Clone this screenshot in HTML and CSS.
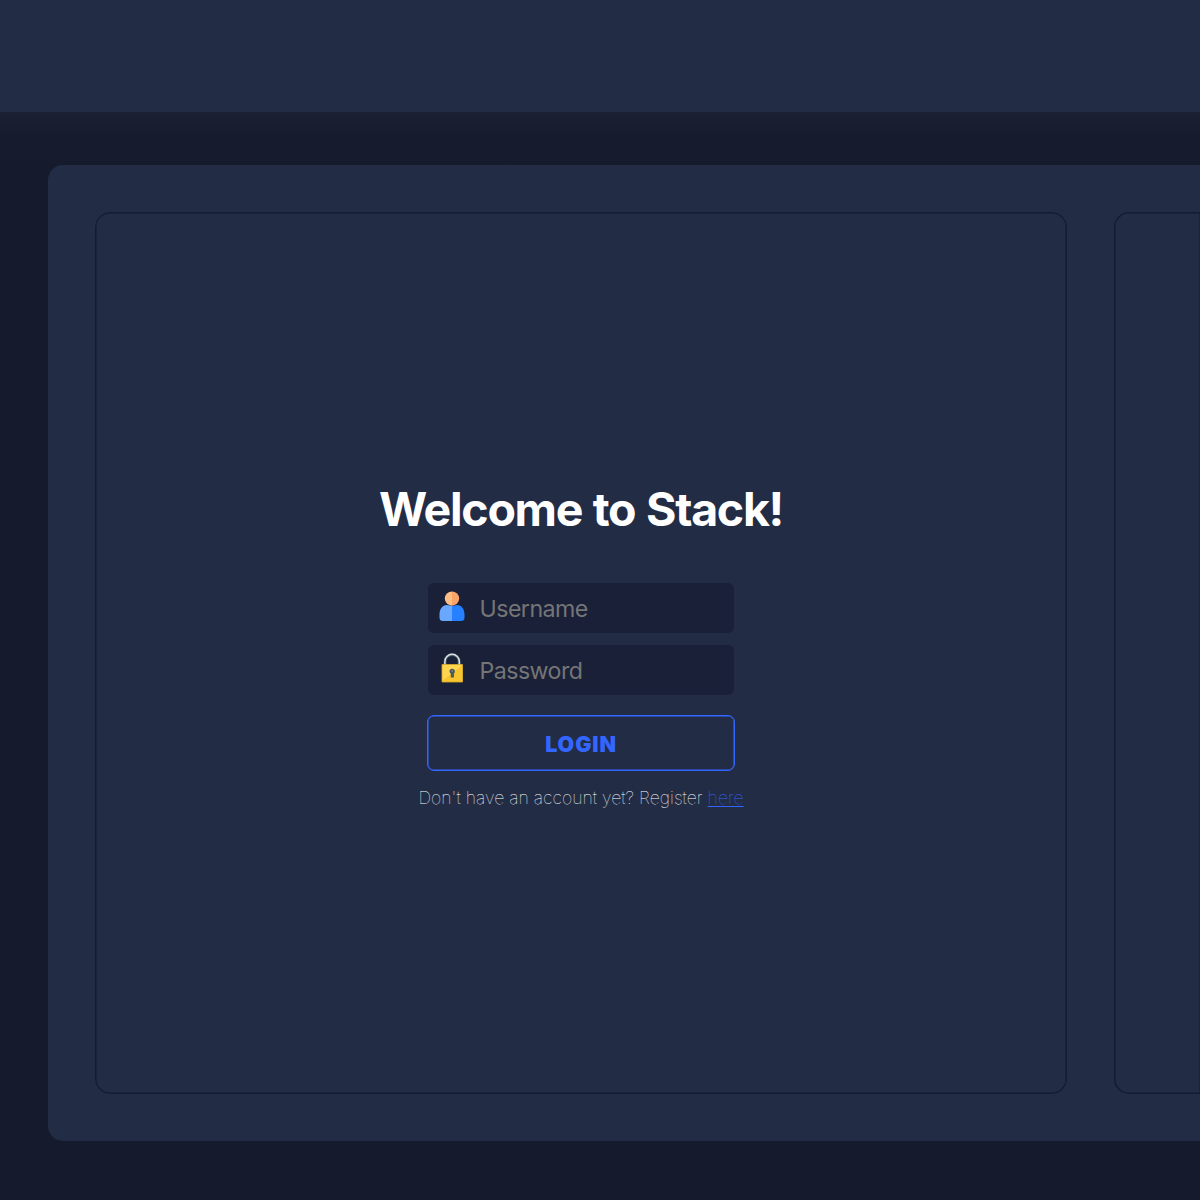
FILE: index.html
```html
<!DOCTYPE html>
<html lang="en">
<head>
<meta charset="utf-8">
<title>Stack</title>
<link rel="stylesheet" href="styles.css">
</head>
<body>
<header class="topbar"></header>
<main class="page">
  <div class="panel">
    <section class="card card-main">
      <h1 class="title">Welcome to Stack!</h1>
      <form class="form">
        <label class="field">
          <svg class="icon" viewBox="0 0 30 32" aria-hidden="true">
            <path fill="#6aa8ff" d="M15 16C13.200 16 12.400 15 10 15C5 15 2.500 19.500 2.500 24.500V27.500Q2.500 31 6 31H15Z"/>
            <path fill="#2680ff" d="M15 16C16.800 16 17.600 15 20 15C25 15 27.500 19.500 27.500 24.500V27.500Q27.500 31 24 31H15Z"/>
            <path fill="#ffbd86" d="M15 1.500A7.200 7.100 0 0 0 15 15.700Z"/>
            <path fill="#fca368" d="M15 1.500A7.200 7.100 0 0 1 15 15.700Z"/>
          </svg>
          <input class="input" type="text" placeholder="Username">
        </label>
        <label class="field">
          <svg class="icon" viewBox="0 0 30 32" aria-hidden="true">
            <path d="M8 14V9.500A7.100 7.100 0 0 1 22.200 9.500V14" fill="none" stroke="#465a61" stroke-width="3"/>
            <path d="M7.900 13V9.500A7.200 7.200 0 0 1 22.300 9.500V13" fill="none" stroke="#d8dfe1" stroke-width="1.500"/>
            <path d="M5 12.500H25.500V30H5Z" fill="#ffd54f"/>
            <path d="M5 29L25.500 13V30H5Z" fill="#f9c52e"/>
            <path d="M5 12.500H25.500V30H5Z" fill="none" stroke="#d5a929" stroke-width=".8"/>
            <path d="M12.500 19.300A2.700 2.500 0 1 1 17.900 19.300Q17.900 20.700 16.900 21.700V25.500H13.800V21.700Q12.500 20.700 12.500 19.300Z" fill="#455a64"/>
            <circle cx="15.300" cy="19" r=".7" fill="#aaa267"/>
          </svg>
          <input class="input" type="password" placeholder="Password">
        </label>
        <button class="login" type="button">LOGIN</button>
      </form>
      <p class="register">Don't have an account yet? Register <a class="link" href="#">here</a></p>
    </section>
    <section class="card card-side"></section>
  </div>
</main>
</body>
</html>
```
FILE: styles.css
```css
* { box-sizing: border-box; }
body {
  margin: 0;
  height: 1200px;
  overflow: hidden;
  display: flex;
  flex-direction: column;
  background: #151b2d;
  font-family: Inter, sans-serif;
}
.topbar { flex: none; height: 111.500px; background: #222c45; }
.page {
  flex: 1;
  padding: 53px 0 59px 48px;
  background: linear-gradient(#1b2033, #171b2e 26px, #151b2d 53px);
}
.panel {
  height: 976.500px;
  padding: 47px 0 47px 47px;
  display: flex;
  gap: 47px;
  background: #222c45;
  border-radius: 15px 0 0 15px;
}
.card {
  border: 1px solid #151b33;
  border-radius: 15px;
  box-shadow: inset 0 0 0 .5px #151b33;
}
.card-main {
  flex: none;
  width: 972px;
  display: flex;
  flex-direction: column;
  align-items: center;
  padding-top: 267.500px;
}
.card-side { flex: 1; border-right: 0; border-radius: 15px 0 0 15px; }
.title {
  margin: 0;
  color: #fff;
  font-size: 46.500px;
  font-weight: 700;
  line-height: 58px;
  letter-spacing: -1.300px;
  word-spacing: 1px;
  white-space: nowrap;
}
.form { width: 308px; margin-top: 45px; }
.field {
  display: flex;
  height: 50px;
  margin: 0 1px 12px;
  padding: 7px 9px;
  background: #192038;
  border-radius: 6px;
}
.icon { flex: none; width: 30px; height: 32px; margin: 0 .5px 0 -.5px; }
.input {
  flex: 1;
  min-width: 0;
  height: 38px;
  margin-left: 12.500px;
  padding: 0;
  border: 0;
  outline: 0;
  background: transparent;
  color: #fff;
  font: 400 23.200px Inter, sans-serif;
  letter-spacing: -.550px;
}
.input::placeholder { color: #757575; opacity: 1; }
.login {
  width: 308px;
  height: 56px;
  margin-top: 20px;
  display: block;
  padding: 2px 0 0;
  border: 1px solid #3366ff;
  border-radius: 7px;
  box-shadow: inset 0 0 0 .5px #3366ff;
  background: transparent;
  color: #3366ff;
  font: 900 21.500px Inter, sans-serif;
  letter-spacing: .900px;
}
.register {
  margin: 14.500px 0 0;
  color: #fff;
  font-size: 17.600px;
  font-weight: 100;
  line-height: 24px;
  letter-spacing: .030px;
  white-space: nowrap;
}
.link { color: #3366ff; text-decoration-thickness: 1.300px; text-underline-offset: 2px; }
```
